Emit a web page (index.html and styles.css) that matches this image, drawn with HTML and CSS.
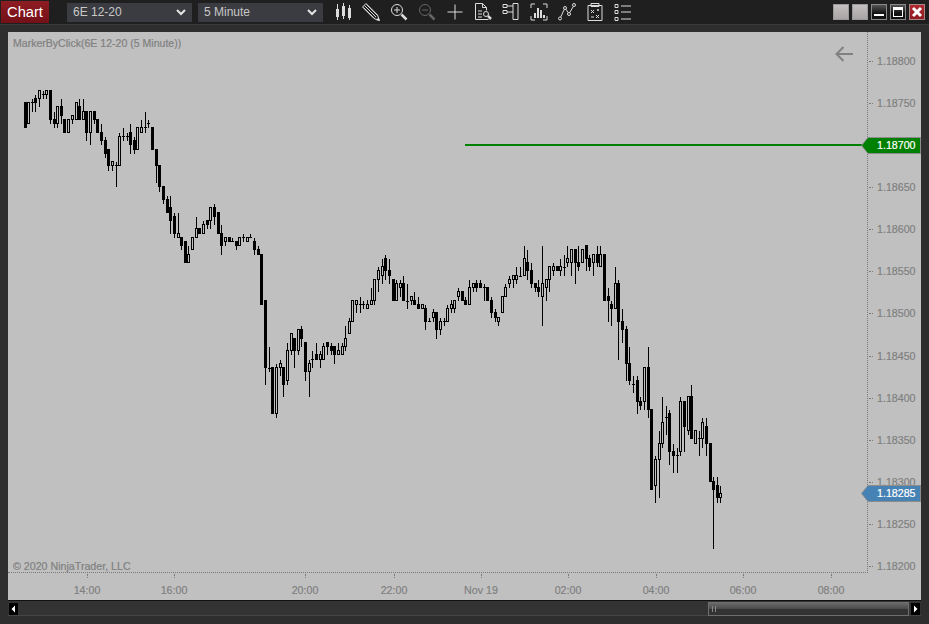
FILE: index.html
```html
<!DOCTYPE html>
<html lang="en">
<head>
  <meta charset="UTF-8" />
  <title>Chart - 6E 12-20</title>
  <link rel="stylesheet" href="styles.css">
</head>
<body>
  <div class="window">
    <div class="titlebar">
      <div class="tab">Chart</div>
      <div class="picker instrument">6E 12-20
        <svg class="chevron" viewBox="0 0 10 7"><path d="M1 1l4 4 4-4"/></svg>
      </div>
      <div class="picker interval">5 Minute
        <svg class="chevron" viewBox="0 0 10 7"><path d="M1 1l4 4 4-4"/></svg>
      </div>
      <div class="tools">
        <svg class="tool" viewBox="0 0 18 18"><path d="M3.500 1v16M9.500 0v16M15.500 2v15"/><path class="solid" d="M2 6h3v8H2zM8 3h3v10H8zM14 5h3v10h-3z"/></svg>
        <svg class="tool" viewBox="0 0 18 18"><path d="M4 .5L.5 4l11.500 11.500 5.500 2-2-5.500zM2.500 2.500l11.500 11.500M4.500 1.500l11 11M1.500 4.500l11 11"/><path class="solid" d="M14 17l3.500 1-1-3.500z"/></svg>
        <svg class="tool" viewBox="0 0 18 18"><circle cx="7" cy="7" r="5.500"/><path d="M7 4v6M4 7h6"/><path class="thick" d="M11.500 11.500l5 5"/></svg>
        <svg class="tool dim" viewBox="0 0 18 18"><circle cx="7" cy="7" r="5.500"/><path d="M4 7h6"/><path class="thick" d="M11.500 11.500l5 5"/></svg>
        <svg class="tool" viewBox="0 0 18 18"><path d="M9 1.500v15M1.500 9h15"/></svg>
        <svg class="tool" viewBox="0 0 18 18"><path d="M1.500 .5h7l4 4v3M8.500 .5v4h4M1.500 .5v16h13M4 8h4M4 11h4M4 14h4"/><circle cx="12" cy="11" r="2.500"/><path class="thick" d="M14 13l3 3"/></svg>
        <svg class="tool" viewBox="0 0 18 18"><path d="M1 1.500h4v3H1zM1 7.500h4v3H1zM5 3h6M5 9h6M11 .5h5v16h-5z"/></svg>
        <svg class="tool" viewBox="0 0 18 18"><path d="M1 5V1h4M13 1h4v4M1 13v4h4M13 17h4v-4"/><path class="thick-bar" d="M5 15v-5M8 15V5M11 15V7M14 15v-3"/></svg>
        <svg class="tool" viewBox="0 0 18 18"><circle cx="2" cy="15.500" r="1.500"/><circle cx="7" cy="5" r="1.500"/><circle cx="11" cy="11" r="1.500"/><circle cx="16" cy="2" r="1.500"/><path d="M2.700 14l3.600-7.700M8 6.300l2.200 3.400M11.800 9.500l3.400-6"/></svg>
        <svg class="tool" viewBox="0 0 18 18"><path d="M2 2.500h14v15H2zM5 .5h8v3H5zM5 7l3 3M8 7l-3 3M10 12l3 3M13 12l-3 3M12 6v2M11 7h2M5 14h3"/></svg>
        <svg class="tool" viewBox="0 0 18 18"><path d="M1 1.500h3v3H1zM1 7.500h3v3H1zM1 14.500h3v3H1zM7 3h10M7 9h10M7 16h10"/></svg>
      </div>
      <div class="winbuttons">
        <div class="winbtn blank"></div>
        <div class="winbtn blank"></div>
        <div class="winbtn dark"><svg viewBox="0 0 14 14"><path class="mark" d="M2 9h10v2H2z"/></svg></div>
        <div class="winbtn dark"><svg viewBox="0 0 14 14"><path class="mark" d="M2 2h10v10H2zM3 5v6h8V5z" fill-rule="evenodd"/></svg></div>
        <div class="winbtn close"><svg viewBox="0 0 14 14"><path class="cross" d="M3 3l8 8M11 3l-8 8"/></svg></div>
      </div>
    </div>

    <div class="frame">
      <div class="chart" id="chart">
        <div class="plot-row">
          <div class="plot">
            <svg class="candles" id="candles" viewBox="8 32 859 540" width="859" height="540"></svg>
            <div class="chart-title">MarkerByClick(6E 12-20 (5 Minute))</div>
            <svg class="back-arrow" viewBox="0 0 18 16"><path d="M18 8H2M8.500 1L1.500 8l7 7"/></svg>
            <div class="copyright">© 2020 NinjaTrader, LLC</div>
          </div>
          <div class="price-axis" id="priceAxis"></div>
        </div>
        <div class="time-axis" id="timeAxis"></div>
      </div>
      <div class="scrollbar">
        <div class="scroll-btn"><svg viewBox="0 0 9 12"><path d="M6 2.500v7L2.500 6z"/></svg></div>
        <div class="thumb"><span class="grip"></span></div>
        <div class="scroll-btn"><svg viewBox="0 0 9 12"><path d="M3 2.500v7L6.500 6z"/></svg></div>
      </div>
    </div>
  </div>
  <script src="chart.js"></script>
</body>
</html>
```

FILE: styles.css
```css
body {
  margin: 0;
  background: #2e2e2e;
  font-family: 'Liberation Sans', Arial, sans-serif;
  overflow: hidden;
}
.window {
  width: 929px;
  height: 624px;
  display: flex;
  flex-direction: column;
}
.titlebar {
  height: 25px;
  flex: none;
  display: flex;
  align-items: center;
  background: #1f1f1f;
  border-bottom: 1px solid #3a3a3a;
  box-sizing: border-box;
}
.tab {
  width: 48px;
  height: 22px;
  margin-left: 1px;
  background: linear-gradient(to bottom, #8e1c22, #741018);
  color: #fff;
  font-size: 14.67px;
  line-height: 22px;
  text-align: center;
}
.picker {
  height: 19px;
  box-sizing: border-box;
  display: flex;
  align-items: center;
  justify-content: space-between;
  padding: 0 6px;
  background: #3b3b42;
  color: #c8c8c8;
  font-size: 12px;
}
.instrument { width: 125px; margin-left: 18px; }
.interval { width: 125px; margin-left: 6px; }
.chevron {
  width: 10px;
  height: 7px;
  fill: none;
  stroke: #e4e4e4;
  stroke-width: 2;
}
.tools {
  display: flex;
  margin-left: 6px;
}
.tool {
  width: 18px;
  height: 18px;
  padding: 0 5px;
  fill: none;
  stroke: #dcdcdc;
  stroke-width: 1;
}
.tool .solid { fill: #dcdcdc; stroke: none; }
.tool .thick { stroke-width: 2.500; }
.tool .thick-bar { stroke-width: 2; }
.tool.dim { stroke: #666; }
.winbuttons {
  display: flex;
  gap: 3px;
  margin-left: auto;
  margin-right: 4px;
}
.winbtn {
  width: 16px;
  height: 16px;
  box-sizing: border-box;
  border: 1px solid #8a8a8a;
}
.winbtn svg {
  display: block;
  width: 14px;
  height: 14px;
}
.blank { background: linear-gradient(to bottom, #c4c0c0, #a8a4a4); border-color: #999; }
.dark { background: linear-gradient(to bottom, #555, #111 60%); }
.close { background: linear-gradient(to bottom, #b02a30, #8e1c22); border-color: #a88; }
.mark { fill: #fff; }
.cross { stroke: #fff; stroke-width: 3; fill: none; }

.frame {
  flex: 1;
  padding: 7px 8px 7px;
  display: flex;
  flex-direction: column;
  box-sizing: border-box;
}
.chart {
  height: 569px;
  flex: none;
  position: relative;
  background: #c0c0c0;
  color: #808080;
  font-size: 10.67px;
  -webkit-text-stroke: 0.2px;
  border-bottom: 1px solid #111;
  box-sizing: border-box;
}
.plot-row {
  height: 541px;
  display: flex;
}
.plot {
  position: relative;
  width: 860px;
  height: 541px;
  box-sizing: border-box;
  border-right: 1px dotted #7a7a7a;
  border-bottom: 1px dotted #7a7a7a;
}
.candles {
  position: absolute;
  top: 0;
  left: 0;
  shape-rendering: crispEdges;
}
.chart-title {
  position: absolute;
  top: 5px;
  left: 5px;
  font-size: 10.55px;
}
.copyright {
  position: absolute;
  bottom: 0;
  left: 5px;
  font-size: 10.67px;
}
.back-arrow {
  position: absolute;
  top: 14px;
  left: 827px;
  width: 18px;
  height: 16px;
  fill: none;
  stroke: #808080;
  stroke-width: 2;
}
.price-axis {
  position: relative;
  flex: 1;
}
.price-label {
  position: absolute;
  left: 9px;
  line-height: 12px;
}
.price-tick {
  position: absolute;
  left: 1px;
  width: 4px;
  border-top: 1px dotted #7a7a7a;
}
.time-axis {
  position: relative;
  height: 27px;
}
.time-label {
  position: absolute;
  top: 11px;
  width: 40px;
  margin-left: -20px;
  text-align: center;
  line-height: 12px;
}
.time-tick {
  position: absolute;
  top: 1px;
  height: 4px;
  border-left: 1px dotted #7a7a7a;
}
.flag {
  position: absolute;
  left: 853px;
  width: 60px;
  height: 17px;
  background: #8c8c8c;
  clip-path: polygon(0 50%, 7px 0, 100% 0, 100% 100%, 7px 100%);
}
.flag-body {
  margin: 1px;
  height: 15px;
  padding-left: 15px;
  color: #fff;
  line-height: 15px;
  clip-path: polygon(0 50%, 6px 0, 100% 0, 100% 100%, 6px 100%);
}
.flag-target { background: #008000; }
.flag-last { background: #4682b4; }

.scrollbar {
  height: 15px;
  flex: none;
  display: flex;
  align-items: flex-end;
  justify-content: space-between;
  padding: 0 1px;
  background: #333;
  border-bottom: 1px solid #454545;
  box-sizing: border-box;
  position: relative;
}
.scroll-btn {
  width: 9px;
  height: 12px;
  background: #000;
}
.scroll-btn svg {
  display: block;
  width: 9px;
  height: 12px;
  fill: #fff;
}
.thumb {
  position: absolute;
  left: 700px;
  top: 1px;
  width: 201px;
  height: 14px;
  box-sizing: border-box;
  border: 1px solid #6e6e6e;
  background: linear-gradient(to bottom, #6a6a6a, #4a4a4a 50%, #333 50%);
}
.grip {
  display: block;
  width: 2px;
  height: 6px;
  margin: 3px 0 0 3px;
  border-left: 1px solid #888;
  border-right: 1px solid #888;
}
```

FILE: chart.js
```js
// page coordinates: x, wick top, body top, body bottom, wick bottom, hollow
const bars = [
  [25,102,102,128,128,0],[28,102,102,124,124,1],[32,99,102,102,112,0],[35,95,98,103,112,0],
  [39,90,90,99,107,1],[43,91,94,94,99,0],[46,90,90,95,99,1],[50,90,90,120,124,0],
  [54,112,119,124,128,0],[57,106,106,124,128,1],[61,99,106,116,124,0],[64,119,119,133,133,0],
  [68,119,119,133,133,1],[72,115,115,120,124,1],[76,102,102,120,120,1],[79,99,106,120,120,0],
  [83,99,111,120,120,1],[86,111,111,133,141,0],[90,111,111,133,145,1],[94,111,111,120,124,0],
  [97,119,119,133,133,0],[101,124,132,141,145,0],[105,137,140,154,158,0],[108,149,149,166,171,0],
  [112,161,161,166,171,1],[116,162,165,165,187,0],[119,133,136,166,166,1],[123,128,136,136,141,0],
  [127,133,136,136,141,0],[130,124,132,145,154,0],[134,137,140,150,154,0],[137,127,127,150,150,1],
  [141,120,127,133,133,1],[145,112,127,127,133,0],[148,120,123,123,128,0],[152,127,127,150,150,0],
  [156,149,149,166,183,0],[159,165,165,187,192,0],[163,186,186,200,204,0],[167,196,199,213,213,0],
  [170,196,207,221,234,0],[174,213,216,234,238,0],[178,213,233,238,238,1],[181,237,237,246,250,0],
  [185,241,241,263,263,0],[188,246,254,263,263,1],[192,237,237,250,250,1],[196,217,228,238,238,1],
  [199,228,228,234,234,0],[203,221,224,234,234,1],[207,220,220,225,229,0],[210,207,207,221,229,1],
  [214,204,207,217,225,0],[218,212,212,234,234,0],[221,225,233,246,255,0],[225,237,237,242,246,1],
  [229,237,237,242,242,0],[232,238,241,241,241,0],[236,241,241,246,250,0],[239,237,237,246,246,1],
  [243,234,237,237,242,0],[247,237,237,242,242,1],[250,234,237,237,237,0],[254,238,241,250,255,0],
  [258,246,249,255,255,0],[261,254,254,305,305,0],[265,300,300,368,385,0],[269,347,368,368,372,0],
  [272,367,367,414,414,0],[276,364,367,414,418,1],[280,360,363,368,376,1],[283,367,367,385,397,0],
  [287,343,350,381,385,1],[291,333,333,351,355,1],[294,338,338,351,368,0],[298,329,329,351,355,1],
  [301,326,329,339,347,0],[305,342,342,372,381,0],[309,360,363,372,397,1],[312,351,359,359,368,0],
  [316,343,354,360,360,0],[320,351,354,360,368,1],[323,343,346,360,360,1],[327,342,342,347,355,0],
  [331,343,346,351,355,0],[334,346,346,355,364,0],[338,343,350,355,355,1],[342,343,346,355,355,1],
  [345,326,338,347,351,1],[349,318,321,334,334,1],[352,300,300,322,322,1],[356,300,300,305,313,1],
  [360,297,304,304,313,0],[363,301,304,304,309,0],[367,300,304,309,309,1],[371,288,300,305,305,1],
  [374,279,279,301,305,1],[378,267,270,280,292,1],[382,259,266,276,284,1],[385,255,258,271,280,0],
  [389,259,270,276,284,0],[393,279,279,301,301,0],[396,280,283,301,301,1],[400,280,283,288,297,1],
  [403,276,283,301,301,0],[407,284,301,301,309,0],[411,296,296,301,305,1],[414,292,300,305,305,0],
  [418,297,304,309,309,0],[422,304,304,309,309,1],[425,305,308,322,330,0],[429,318,321,321,322,0],
  [433,309,312,318,322,1],[436,312,312,330,339,0],[440,318,321,330,335,1],[444,318,321,321,326,0],
  [447,305,308,322,322,1],[451,300,304,309,313,1],[454,300,300,309,313,1],[458,288,291,297,301,1],
  [462,291,291,301,301,0],[465,297,300,305,305,0],[469,280,287,305,305,1],[473,283,283,288,292,1],
  [476,280,283,288,292,0],[480,280,283,288,288,0],[484,284,287,287,301,0],[487,287,287,301,301,0],
  [491,297,300,313,318,0],[495,309,312,318,322,0],[498,317,317,322,326,1],[502,296,296,313,313,1],
  [505,284,287,297,297,1],[509,276,279,284,288,1],[513,275,275,280,288,1],[516,267,275,280,284,1],
  [520,267,276,276,276,0],[524,246,258,276,276,1],[527,250,262,271,280,0],[531,263,270,284,288,0],
  [535,283,283,288,292,0],[538,280,287,292,297,0],[542,246,283,297,326,1],[546,279,279,288,301,1],
  [549,266,266,280,292,1],[553,263,266,271,276,1],[557,266,266,271,271,0],[560,259,266,271,276,1],
  [564,255,267,267,276,0],[567,246,258,263,267,1],[571,249,249,263,276,1],[575,249,249,263,284,0],
  [578,246,262,267,271,0],[582,249,249,263,263,1],[586,245,245,259,271,0],[589,255,258,267,271,0],
  [593,254,254,263,276,1],[597,246,254,263,267,0],[600,246,254,267,267,1],[604,254,254,301,301,0],
  [608,288,296,301,322,0],[611,301,304,309,326,0],[615,267,283,309,309,1],[618,280,283,322,360,0],
  [622,309,321,330,343,0],[626,326,329,364,381,0],[629,347,363,381,385,0],[633,376,384,384,393,0],
  [637,376,380,402,414,0],[640,397,401,406,410,0],[644,367,367,402,410,1],[648,347,367,410,418,0],
  [651,409,409,490,490,0],[655,456,459,486,503,1],[659,431,443,460,498,1],[662,397,422,444,448,1],
  [666,406,417,417,435,0],[669,410,413,452,465,0],[673,444,451,456,473,0],[677,448,455,455,473,0],
  [680,397,401,452,456,1],[684,401,401,427,452,0],[688,396,396,431,435,1],[691,385,396,439,439,0],
  [695,430,430,444,444,1],[699,431,438,438,456,0],[702,418,422,439,448,1],[706,418,426,444,456,0],
  [710,443,443,482,482,0],[713,477,481,490,549,0],[717,477,485,498,503,0],[720,486,493,498,503,1]
];

const NS = 'http://www.w3.org/2000/svg';
const svg = document.getElementById('candles');

function addRect(x, y, w, h, fill) {
  const r = document.createElementNS(NS, 'rect');
  r.setAttribute('x', x);
  r.setAttribute('y', y);
  r.setAttribute('width', w);
  r.setAttribute('height', h);
  r.setAttribute('fill', fill);
  svg.appendChild(r);
}

bars.forEach(([x, wickTop, top, bottom, wickBottom, hollow]) => {
  addRect(x, wickTop, 1, wickBottom - wickTop, '#000');
  addRect(x - 1, top, 3, Math.max(bottom - top, 1), '#000');
  if (hollow && bottom - top > 2) addRect(x, top + 1, 1, bottom - top - 2, '#c0c0c0');
});

// target line
addRect(465, 144, 397, 2, '#008000');

const priceAxis = document.getElementById('priceAxis');
const prices = ['1.18800','1.18750','1.18700','1.18650','1.18600','1.18550','1.18500','1.18450','1.18400','1.18350','1.18300','1.18250','1.18200'];
prices.forEach((label, i) => {
  const y = 61 + i * 42.08 - 32;
  const tick = document.createElement('div');
  tick.className = 'price-tick';
  tick.style.top = Math.round(y) + 'px';
  priceAxis.appendChild(tick);
  const text = document.createElement('div');
  text.className = 'price-label';
  text.style.top = Math.round(y - 6) + 'px';
  text.textContent = label;
  priceAxis.appendChild(text);
});

const timeAxis = document.getElementById('timeAxis');
[[87,'14:00'],[174,'16:00'],[305,'20:00'],[394,'22:00'],[481,'Nov 19'],[568,'02:00'],[656,'04:00'],[743,'06:00'],[831,'08:00']].forEach(([x, label]) => {
  const tick = document.createElement('div');
  tick.className = 'time-tick';
  tick.style.left = (x - 8) + 'px';
  timeAxis.appendChild(tick);
  const text = document.createElement('div');
  text.className = 'time-label';
  text.style.left = (x - 8) + 'px';
  text.textContent = label;
  timeAxis.appendChild(text);
});

const chart = document.getElementById('chart');
[['1.18700','flag-target',137],['1.18285','flag-last',485]].forEach(([label, kind, y]) => {
  const flag = document.createElement('div');
  flag.className = 'flag';
  flag.style.top = (y - 32) + 'px';
  const body = document.createElement('div');
  body.className = 'flag-body ' + kind;
  body.textContent = label;
  flag.appendChild(body);
  chart.appendChild(flag);
});
```
